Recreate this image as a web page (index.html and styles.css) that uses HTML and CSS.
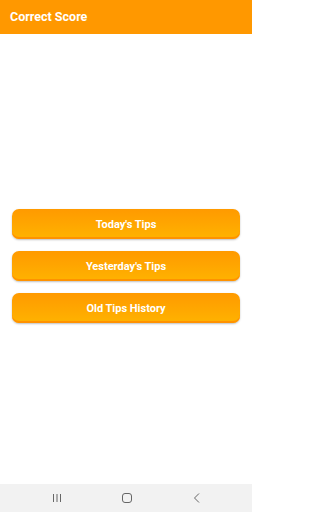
FILE: index.html
```html
<!DOCTYPE html>
<html>
<head>
<meta charset="utf-8">
<link rel="stylesheet" href="styles.css">
</head>
<body>
<div class="screen">
  <header class="appbar"><span class="title">Correct Score</span></header>
  <main class="content">
    <div class="buttons">
      <button class="btn">Today's Tips</button>
      <button class="btn">Yesterday's Tips</button>
      <button class="btn">Old Tips History</button>
    </div>
  </main>
  <nav class="navbar">
    <svg class="nav-icon" width="14" height="14" viewBox="0 0 14 14"><path d="M3.5 3v8M7 3v8M10.5 3v8" stroke="#666" stroke-width="1" fill="none"/></svg>
    <svg class="nav-icon" width="14" height="14" viewBox="0 0 14 14"><rect x="2.5" y="2.5" width="9" height="9" rx="2.5" stroke="#666" stroke-width="1" fill="none"/></svg>
    <svg class="nav-icon" width="14" height="14" viewBox="0 0 14 14"><path d="M9 2.5L4.5 7L9 11.5" stroke="#666" stroke-width="1" fill="none"/></svg>
  </nav>
</div>
</body>
</html>
```
FILE: styles.css
```css
html, body {
  margin: 0;
  padding: 0;
  background: #ffffff;
}
.screen {
  width: 252px;
  height: 512px;
  display: flex;
  flex-direction: column;
  font-family: Roboto, "Liberation Sans", sans-serif;
}
.appbar {
  height: 34px;
  background: #ff9800;
  display: flex;
  align-items: center;
  padding-left: 10px;
  box-sizing: border-box;
}
.title {
  color: #ffffff;
  font-weight: 700;
  font-size: 12.5px;
  margin-top: -1px;
}
.content {
  flex: 1;
  display: flex;
  flex-direction: column;
  padding: 175px 12px 0 12px;
}
.buttons {
  display: flex;
  flex-direction: column;
  gap: 12px;
}
.btn {
  height: 30px;
  border: none;
  border-radius: 7px;
  background: linear-gradient(to bottom, #ff9a00 0%, #ffa600 50%, #ffb300 100%);
  box-shadow: inset 0 -2px 0 #ff9200, 0 1px 2px rgba(0,0,0,0.25);
  color: #ffffff;
  font-family: Roboto, "Liberation Sans", sans-serif;
  font-weight: 700;
  font-size: 11px;
  padding: 0;
  margin: 0;
}
.navbar {
  height: 28px;
  background: #f2f2f2;
  display: flex;
  align-items: center;
  justify-content: space-between;
  padding: 0 48px 0 50px;
}
.nav-icon {
  display: block;
}
```
